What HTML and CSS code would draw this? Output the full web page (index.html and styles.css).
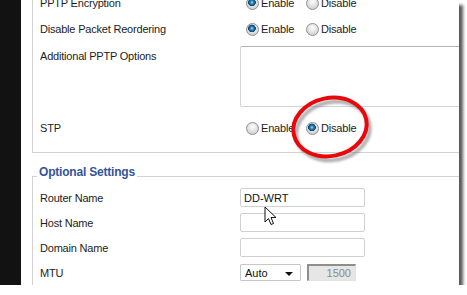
FILE: index.html
```html
<!DOCTYPE html>
<html lang="en">
<head>
    <meta charset="UTF-8">
    <meta name="viewport" content="width=device-width, initial-scale=1.0">
    <title>Basic Setup</title>
    <link rel="stylesheet" href="styles.css">
</head>
<body>
    <div class="shot">
        <div class="sidebar"></div>
        <div class="main">
            <fieldset class="group group-top">
                <div class="row">
                    <span class="label">PPTP Encryption</span>
                    <div class="radios">
                        <label class="opt"><input type="radio" name="enc" checked>Enable</label>
                        <label class="opt"><input type="radio" name="enc">Disable</label>
                    </div>
                </div>
                <div class="row">
                    <span class="label">Disable Packet Reordering</span>
                    <div class="radios">
                        <label class="opt"><input type="radio" name="reorder" checked>Enable</label>
                        <label class="opt"><input type="radio" name="reorder">Disable</label>
                    </div>
                </div>
                <div class="row row-text">
                    <span class="label">Additional PPTP Options</span>
                    <textarea class="options"></textarea>
                </div>
                <div class="row">
                    <span class="label">STP</span>
                    <div class="radios">
                        <label class="opt"><input type="radio" name="stp">Enable</label>
                        <label class="opt"><input type="radio" name="stp" checked>Disable</label>
                    </div>
                </div>
            </fieldset>

            <fieldset class="group group-optional">
                <legend>Optional Settings</legend>
                <div class="row row-first">
                    <span class="label">Router Name</span>
                    <input class="text" type="text" value="DD-WRT">
                </div>
                <div class="row">
                    <span class="label">Host Name</span>
                    <input class="text" type="text">
                </div>
                <div class="row">
                    <span class="label">Domain Name</span>
                    <input class="text" type="text">
                </div>
                <div class="row">
                    <span class="label">MTU</span>
                    <div class="mtu">
                        <span class="select-wrap">
                            <select class="select">
                                <option>Auto</option>
                                <option>Manual</option>
                            </select>
                        </span>
                        <input class="num" type="text" value="1500" disabled>
                    </div>
                </div>
            </fieldset>
        </div>

        <!-- red marker drawn round the STP choice -->
        <svg class="mark" width="96" height="80" viewBox="0 0 96 80">
            <defs>
                <filter id="soft" x="-20%" y="-20%" width="140%" height="140%">
                    <feGaussianBlur stdDeviation="1.2"/>
                </filter>
            </defs>
            <ellipse cx="49" cy="41" rx="37" ry="29" transform="rotate(-12 49 41)"
                     fill="none" stroke="#7a7a7a" stroke-width="4" opacity="0.6" filter="url(#soft)"/>
            <ellipse cx="46" cy="37" rx="37" ry="29" transform="rotate(-12 46 37)"
                     fill="none" stroke="#e8080c" stroke-width="4"/>
        </svg>

        <svg class="cursor" width="14" height="21" viewBox="0 0 14 21">
            <path d="M1 1 L1 16 L4.5 12.5 L7 18.5 L9.5 17.5 L7 11.5 L12 11.5 Z"
                  fill="#fff" stroke="#111" stroke-width="1" stroke-linejoin="round"/>
        </svg>
    </div>
</body>
</html>
```

FILE: styles.css
```css
body {
    margin: 0;
    background: #fff;
    font-family: "Liberation Sans", Arial, sans-serif;
    font-size: 11px;
    color: #1c1c1c;
}

.shot {
    position: relative;
    display: flex;
    width: 459px;
    height: 285px;
    overflow: hidden;
    background: #fff;
    box-shadow: 4px 5px 3px rgba(0, 0, 0, 0.65);
}

.sidebar {
    flex: none;
    width: 21px;
    background: #121212;
}

.main {
    flex: none;
    width: 480px;
    padding-left: 11px;
}

.group {
    margin: 0;
    padding: 0 0 0 7px;
    border: 1px solid #d2d2d2;
    min-width: 0;
}

.group-top {
    margin-top: -10px;
    border-top: none;
    padding-bottom: 11px;
}

.group-optional {
    margin-top: 12px;
    height: 140px;
}

legend {
    margin-left: -3px;
    padding: 0 2px 7px;
    line-height: 15px;
    font-size: 12px;
    font-weight: bold;
    letter-spacing: -0.2px;
    color: #34549a;
}

.row {
    display: grid;
    grid-template-columns: 200px 1fr;
    align-items: center;
    height: 26px;
}

.group-optional .row {
    height: 25px;
}

.group-optional .row-first {
    margin-top: -2px;
}

.label {
    letter-spacing: -0.2px;
    line-height: 14px;
}

.row-text {
    align-items: start;
    height: auto;
    padding: 4px 0 8px;
}

.row-text .label {
    padding-top: 3px;
}

.options {
    display: block;
    box-sizing: border-box;
    width: 240px;
    height: 61px;
    margin: 0;
    border: 1px solid #d4d4d4;
    border-top-color: #b4b4b4;
    border-radius: 2px;
    resize: none;
}

.radios {
    display: flex;
    align-items: center;
    gap: 12px;
    padding-left: 6px;
}

.opt {
    display: flex;
    align-items: center;
    gap: 2px;
    letter-spacing: -0.2px;
}

.opt input {
    appearance: none;
    -webkit-appearance: none;
    box-sizing: border-box;
    width: 13px;
    height: 13px;
    margin: 0;
    border: 1px solid #909090;
    border-radius: 50%;
    background: radial-gradient(circle at 50% 35%, #ffffff, #d2d2d2 75%);
}

.opt input:checked {
    background:
        radial-gradient(circle at 45% 40%, #b4e2f8 0, #2d84b6 1.6px, #0d456b 3.6px, transparent 4.1px),
        radial-gradient(circle at 50% 35%, #ffffff, #d2d2d2 75%);
}

.text {
    box-sizing: border-box;
    width: 125px;
    height: 19px;
    margin: 0;
    padding: 0 3px;
    border: 1px solid #d0d0d0;
    border-radius: 2px;
    font: inherit;
    color: #111;
}

.mtu {
    display: flex;
    align-items: center;
    gap: 6px;
}

.select-wrap {
    position: relative;
    display: block;
}

.select-wrap::after {
    content: "";
    position: absolute;
    right: 8px;
    top: 8px;
    border-left: 4px solid transparent;
    border-right: 4px solid transparent;
    border-top: 4px solid #111;
}

.select {
    appearance: none;
    -webkit-appearance: none;
    display: block;
    box-sizing: border-box;
    width: 61px;
    height: 17px;
    margin: 0;
    padding: 0 4px;
    border: 1px solid #c8c8c8;
    border-radius: 1px;
    background: #fff;
    font: inherit;
    color: #111;
}

.num {
    box-sizing: border-box;
    width: 49px;
    height: 17px;
    margin: 0;
    padding: 0 4px 0 0;
    border: 1px solid #e2e2e2;
    border-top: 2px solid #8e8e8e;
    border-left: 2px solid #8e8e8e;
    background: #e6e6e6;
    font: inherit;
    color: #8a8a8a;
    text-align: right;
}

.mark {
    position: absolute;
    left: 284px;
    top: 90px;
}

.cursor {
    position: absolute;
    left: 264px;
    top: 206px;
}
```
